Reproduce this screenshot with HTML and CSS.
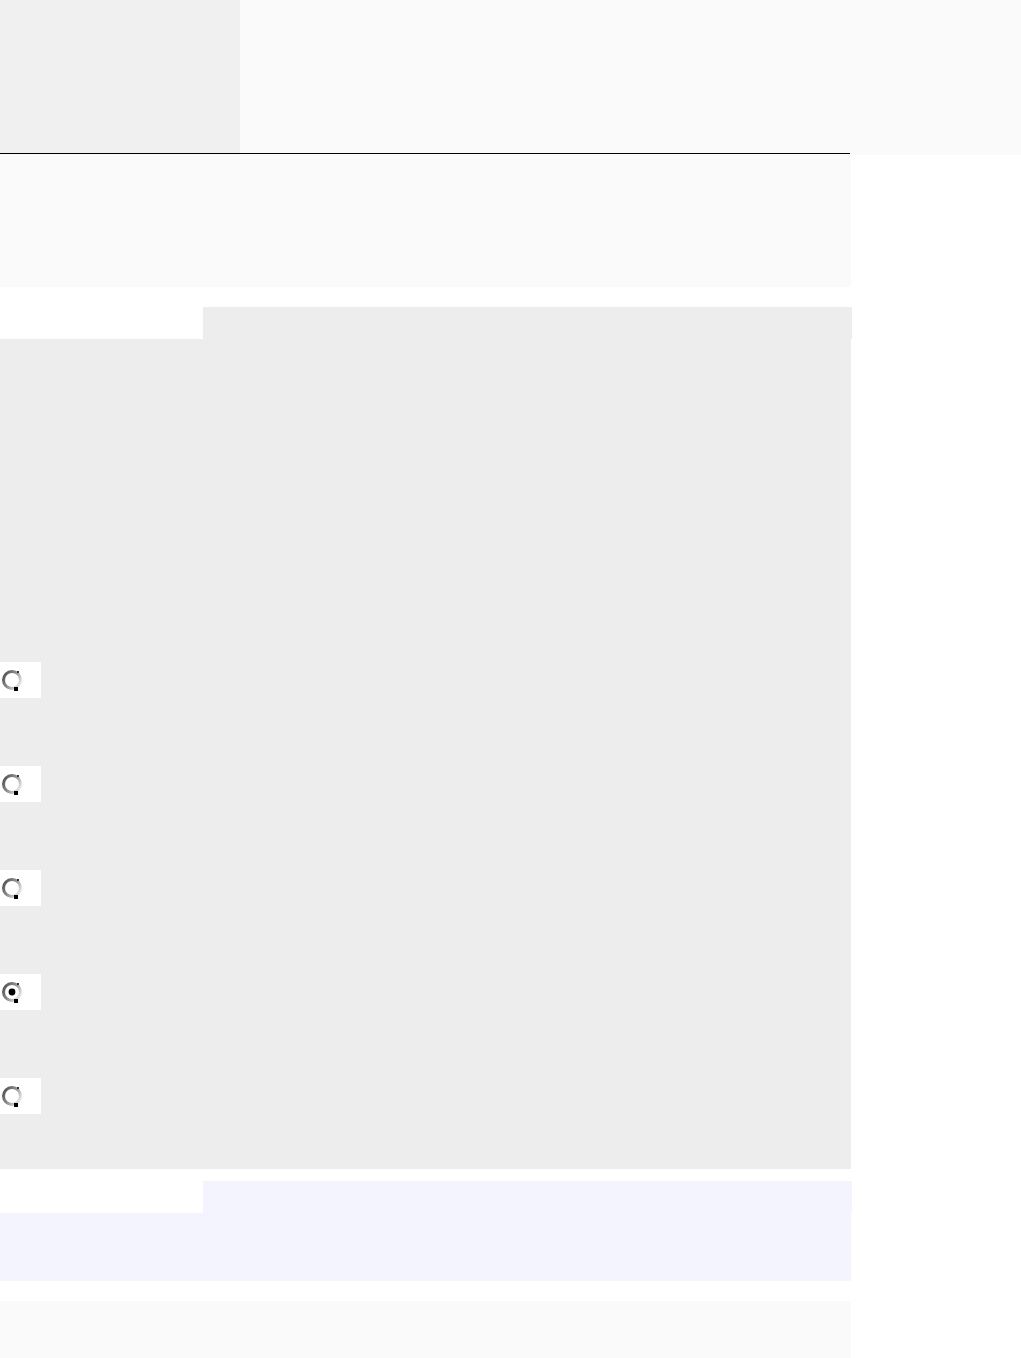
FILE: index.html
```html
<!DOCTYPE html>
<html lang="en">
<head>
<meta charset="utf-8">
<title>Form</title>
<link rel="stylesheet" href="styles.css">
</head>
<body>
<div class="header">
  <div class="header-left"></div>
  <div class="header-right"></div>
</div>
<div class="divider"><div class="rule"></div></div>
<div class="panel panel-intro"></div>

<section class="group group-grey">
  <div class="tab-row"><div class="tab-space"></div><div class="tab"></div></div>
  <div class="panel panel-options">
    <ul class="options">
      <li class="option"><span class="radio-box"><svg class="radio" width="24" height="26" viewBox="0 0 24 26"><defs><linearGradient id="rg1" x1="0" y1="0.2" x2="1" y2="0.8"><stop offset="0" stop-color="#555"/><stop offset="0.45" stop-color="#8c8c8c"/><stop offset="1" stop-color="#ececec"/></linearGradient></defs><circle cx="12" cy="14" r="8.5" fill="#fff" stroke="url(#rg1)" stroke-width="3"/><rect x="14" y="21" width="4" height="4" fill="#000"/><rect x="17" y="5" width="2" height="2" fill="#333"/></svg></span></li>
      <li class="option"><span class="radio-box"><svg class="radio" width="24" height="26" viewBox="0 0 24 26"><circle cx="12" cy="14" r="8.5" fill="#fff" stroke="url(#rg1)" stroke-width="3"/><rect x="14" y="21" width="4" height="4" fill="#000"/><rect x="17" y="5" width="2" height="2" fill="#333"/></svg></span></li>
      <li class="option"><span class="radio-box"><svg class="radio" width="24" height="26" viewBox="0 0 24 26"><circle cx="12" cy="14" r="8.5" fill="#fff" stroke="url(#rg1)" stroke-width="3"/><rect x="14" y="21" width="4" height="4" fill="#000"/><rect x="17" y="5" width="2" height="2" fill="#333"/></svg></span></li>
      <li class="option"><span class="radio-box"><svg class="radio" width="24" height="26" viewBox="0 0 24 26"><circle cx="12" cy="14" r="8.5" fill="#fff" stroke="url(#rg1)" stroke-width="3"/><circle cx="12" cy="14" r="3.4" fill="#000"/><rect x="14" y="21" width="4" height="4" fill="#000"/><rect x="17" y="5" width="2" height="2" fill="#333"/></svg></span></li>
      <li class="option"><span class="radio-box"><svg class="radio" width="24" height="26" viewBox="0 0 24 26"><circle cx="12" cy="14" r="8.5" fill="#fff" stroke="url(#rg1)" stroke-width="3"/><rect x="14" y="21" width="4" height="4" fill="#000"/><rect x="17" y="5" width="2" height="2" fill="#333"/></svg></span></li>
    </ul>
  </div>
</section>

<section class="group group-lavender">
  <div class="tab-row"><div class="tab-space"></div><div class="tab"></div></div>
  <div class="panel panel-note"></div>
</section>

<div class="panel panel-footer"></div>
</body>
</html>
```
FILE: styles.css
```css
html, body {
  margin: 0;
  padding: 0;
  background: #ffffff;
  font-family: "Liberation Sans", Arial, sans-serif;
}

.header {
  display: flex;
  height: 153px;
}
.header-left {
  width: 240px;
  background: #f0f0f0;
}
.header-right {
  flex: 1;
  background: #fafafa;
}

.divider {
  height: 2px;
  background: #fafafa;
}
.rule {
  width: 850px;
  height: 1px;
  background: #000;
}

.panel {
  width: 851px;
}
.panel-intro {
  height: 132px;
  background: #fafafa;
}

.group {
  margin-top: 20px;
}
.tab-row {
  display: flex;
  height: 32px;
  width: 852px;
}
.tab-space {
  width: 203px;
  background: #ffffff;
}
.tab {
  flex: 1;
}
.group-grey .tab,
.group-grey .panel {
  background: #ededed;
}
.group-lavender {
  margin-top: 12px;
}
.group-lavender .tab,
.group-lavender .panel {
  background: #f4f4fe;
}

.panel-options {
  height: 830px;
  box-sizing: border-box;
  padding-top: 323px;
}
.options {
  list-style: none;
  margin: 0;
  padding: 0;
  display: flex;
  flex-direction: column;
  gap: 68px;
}
.option {
  height: 36px;
}
.radio-box {
  display: flex;
  width: 41px;
  height: 36px;
  background: #ffffff;
  align-items: center;
}
.radio {
  display: block;
  margin-top: -2px;
}

.panel-note {
  height: 68px;
}

.panel-footer {
  margin-top: 20px;
  height: 60px;
  background: #fafafa;
}
```
